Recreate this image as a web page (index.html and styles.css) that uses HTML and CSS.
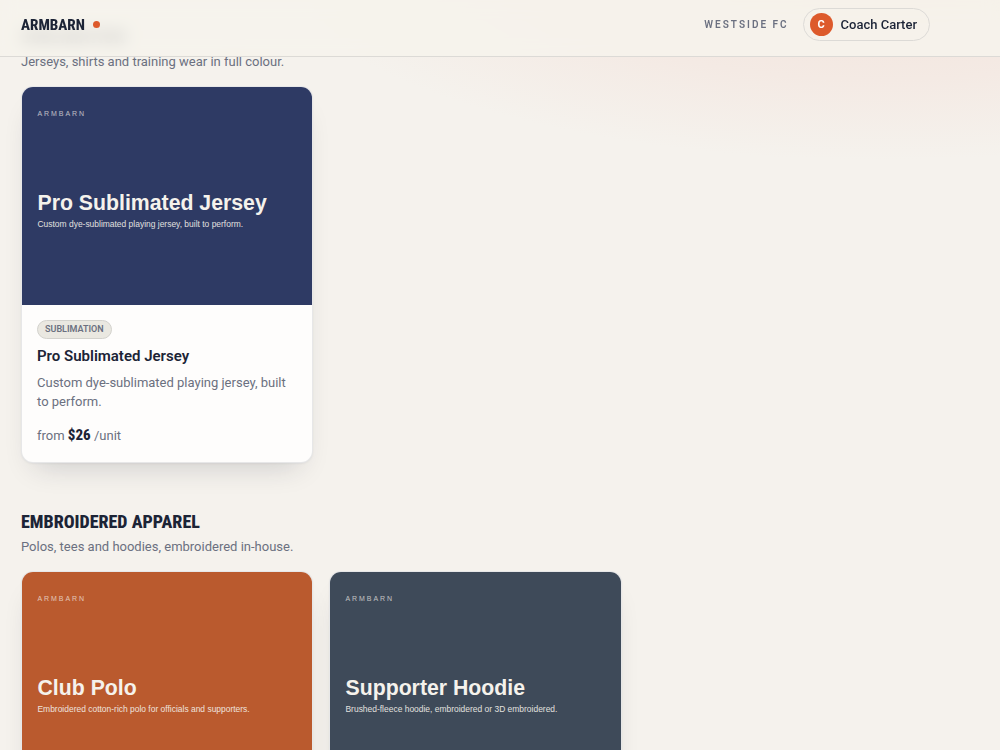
FILE: index.html
```
<!DOCTYPE html>
<html lang="en">
<head>
    <meta charset="UTF-8">
    <meta name="viewport" content="width=device-width, initial-scale=1.0">
    <title>Armbarn</title>
    <link rel="stylesheet" href="styles.css">
</head>
<body>
<header class="topbar">
    <a class="brand" href="#">ARMBARN<span class="brand-dot"></span></a>
    <div class="account">
        <span class="club">Westside FC</span>
        <button class="user" type="button">
            <span class="avatar">C</span>
            Coach Carter
        </button>
    </div>
</header>

<main class="catalogue">
    <section class="range">
        <h2>Sublimation</h2>
        <p class="range-intro">Jerseys, shirts and training wear in full colour.</p>
        <div class="grid">
            <a class="card" href="#">
                <svg class="art art-navy" viewBox="0 0 1200 900">
                    <text class="art-brand" x="64" y="120">ARMBARN</text>
                    <text class="art-title" x="64" y="508">Pro Sublimated Jersey</text>
                    <text class="art-note" x="64" y="578">Custom dye-sublimated playing jersey, built to perform.</text>
                </svg>
                <div class="card-body">
                    <span class="tag">Sublimation</span>
                    <h3>Pro Sublimated Jersey</h3>
                    <p class="desc">Custom dye-sublimated playing jersey, built to perform.</p>
                    <p class="price">from <strong>$26</strong> /unit</p>
                </div>
            </a>
        </div>
    </section>

    <section class="range">
        <h2>Embroidered apparel</h2>
        <p class="range-intro">Polos, tees and hoodies, embroidered in-house.</p>
        <div class="grid">
            <a class="card" href="#">
                <svg class="art art-rust" viewBox="0 0 1200 900">
                    <text class="art-brand" x="64" y="120">ARMBARN</text>
                    <text class="art-title" x="64" y="508">Club Polo</text>
                    <text class="art-note" x="64" y="578">Embroidered cotton-rich polo for officials and supporters.</text>
                </svg>
            </a>
            <a class="card" href="#">
                <svg class="art art-slate" viewBox="0 0 1200 900">
                    <text class="art-brand" x="64" y="120">ARMBARN</text>
                    <text class="art-title" x="64" y="508">Supporter Hoodie</text>
                    <text class="art-note" x="64" y="578">Brushed-fleece hoodie, embroidered or 3D embroidered.</text>
                </svg>
            </a>
        </div>
    </section>
</main>
</body>
</html>
```
FILE: styles.css
```
:root {
    --paper: #f5f2ed;
    --ink: #1c2436;
    --muted: #6b7080;
    --accent: #dd5a2b;
    --line: #dcdad6;
    --display: 'Roboto Condensed', 'Roboto', sans-serif;
}

* {
    box-sizing: border-box;
    margin: 0;
    padding: 0;
}

body {
    min-height: 100vh;
    overflow-x: hidden;
    background: radial-gradient(ellipse 600px 200px at 88% -40px, #f3e2da 0%, #f4eae4 60%, var(--paper) 100%) no-repeat var(--paper);
    color: var(--ink);
    font-family: 'Roboto', sans-serif;
    font-size: 13px;
}

a {
    color: inherit;
    text-decoration: none;
}

.topbar {
    position: fixed;
    top: 0;
    left: 0;
    right: 0;
    z-index: 10;
    display: flex;
    justify-content: space-between;
    align-items: center;
    padding: 8px 70px 15px 21px;
    border-bottom: 1px solid var(--line);
    background: rgba(246, 243, 236, 0.85);
    backdrop-filter: blur(8px);
}

.brand {
    display: flex;
    align-items: center;
    gap: 8px;
    font-family: var(--display);
    font-size: 15px;
    font-weight: 800;
}

.brand-dot {
    width: 7px;
    height: 7px;
    border-radius: 50%;
    background: var(--accent);
}

.account {
    display: flex;
    align-items: center;
    gap: 14px;
}

.club {
    color: var(--muted);
    font-size: 10px;
    font-weight: 600;
    letter-spacing: 2px;
    text-transform: uppercase;
}

.user {
    display: flex;
    align-items: center;
    gap: 8px;
    padding: 4px 12px 4px 6px;
    border: 1px solid var(--line);
    border-radius: 999px;
    background: transparent;
    color: var(--ink);
    font: inherit;
    font-weight: 500;
    line-height: 23px;
    cursor: pointer;
}

.avatar {
    display: grid;
    place-items: center;
    width: 23px;
    height: 23px;
    border-radius: 50%;
    background: var(--accent);
    color: #fff;
    font-size: 11px;
    font-weight: 700;
}

.catalogue {
    padding: 24px 70px 48px 21px;
}

.range {
    margin-bottom: 46px;
}

.range h2 {
    font-family: var(--display);
    font-size: 18px;
    font-weight: 800;
    line-height: 26px;
    text-transform: uppercase;
}

.range-intro {
    margin: 2px 0 14px;
    color: var(--muted);
    line-height: 20px;
}

.grid {
    display: grid;
    grid-template-columns: repeat(3, 1fr);
    gap: 16px;
    align-items: start;
}

.card {
    overflow: hidden;
    border: 1px solid rgba(28, 36, 54, 0.1);
    border-radius: 12px;
    background: #fefdfc;
    box-shadow: 0 1px 2px rgba(28, 36, 54, 0.05), 0 16px 28px -14px rgba(28, 36, 54, 0.2);
}

.art {
    display: block;
    width: 100%;
    font-family: 'Liberation Sans', Arial, sans-serif;
    fill: #f5f2ec;
}

.art-navy {
    background: #2e3a64;
}

.art-rust {
    background: #ba5a2e;
}

.art-slate {
    background: #3e4a59;
}

.art-brand {
    font-size: 29px;
    letter-spacing: 8px;
    opacity: 0.7;
}

.art-title {
    font-size: 88px;
    font-weight: 700;
}

.art-note {
    font-size: 35px;
    opacity: 0.9;
}

.card-body {
    padding: 15px 15px 16px;
}

.tag {
    display: inline-block;
    padding: 0 7px;
    border: 1px solid #d3d2cd;
    border-radius: 999px;
    background: #eae8e1;
    color: var(--muted);
    font-size: 9px;
    font-weight: 600;
    line-height: 17px;
    text-transform: uppercase;
}

.card h3 {
    margin-top: 7px;
    font-size: 15px;
    font-weight: 600;
    line-height: 20px;
}

.desc {
    margin-top: 7px;
    color: var(--muted);
    line-height: 19px;
}

.price {
    margin-top: 14px;
    color: var(--muted);
    line-height: 20px;
}

.price strong {
    color: var(--ink);
    font-family: var(--display);
    font-size: 15px;
    font-weight: 800;
}
```
